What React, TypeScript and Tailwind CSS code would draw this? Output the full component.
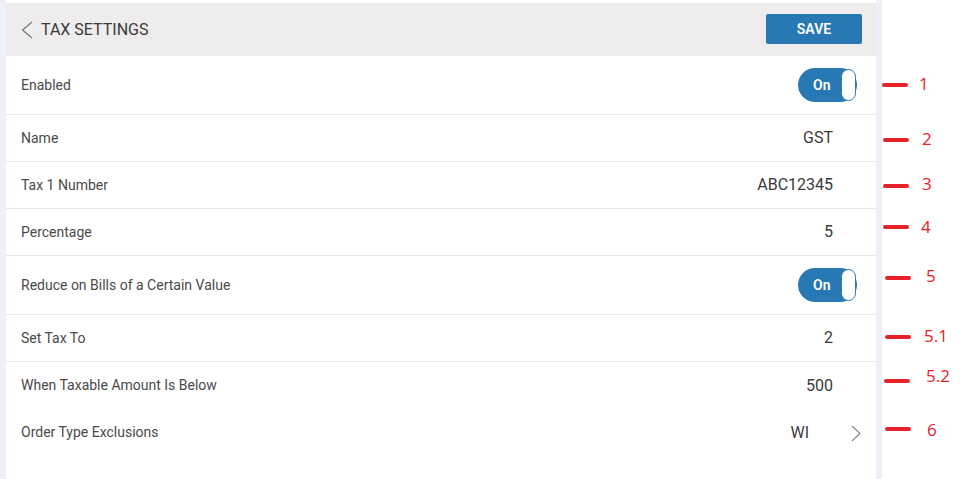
const rows = [
  { label: "Enabled", toggle: true },
  { label: "Name", value: "GST" },
  { label: "Tax 1 Number", value: "ABC12345" },
  { label: "Percentage", value: "5" },
  { label: "Reduce on Bills of a Certain Value", toggle: true },
  { label: "Set Tax To", value: "2" },
  { label: "When Taxable Amount Is Below", value: "500", noBorder: true },
  { label: "Order Type Exclusions", value: "WI", link: true, noBorder: true },
];

const notes = [
  { n: "1", line: 85, lx: 882, num: 84, nx: 919 },
  { n: "2", line: 140, lx: 883, num: 139, nx: 922 },
  { n: "3", line: 186, lx: 883, num: 184, nx: 922 },
  { n: "4", line: 227, lx: 883, num: 227, nx: 921 },
  { n: "5", line: 278, lx: 885, num: 276, nx: 926 },
  { n: "5.1", line: 337, lx: 885, num: 336, nx: 924 },
  { n: "5.2", line: 381, lx: 884, num: 376, nx: 926 },
  { n: "6", line: 429, lx: 885, num: 430, nx: 927 },
];

function Toggle() {
  return (
    <div className="relative w-[59px] h-[34px] rounded-full bg-[#2878b3] flex items-center pl-[15px]">
      <span className="text-white text-[14px] font-semibold">On</span>
      <div className="absolute right-[1px] top-[1px] w-[15px] h-[32px] rounded-full bg-white border border-[#2878b3]" />
    </div>
  );
}

export default function App() {
  return (
    <div className="relative w-[967px] h-[479px] bg-white flex" style={{ fontFamily: "Roboto, sans-serif" }}>
      <div className="w-[6px] bg-[#eef0f8]" />
      <div className="w-[870px] flex flex-col pt-[3px] bg-white">
        {/* Header */}
        <div className="h-[53px] bg-[#eeeced] flex items-center pl-[15px] pr-[14px]">
          <svg width="12" height="18" viewBox="0 0 12 18" className="mt-[1px]">
            <polyline points="11,1 1.5,9 11,17" fill="none" stroke="#777" strokeWidth="1.2" />
          </svg>
          <span className="ml-[8px] text-[16px] text-[#3a3a3a]">TAX SETTINGS</span>
          <button className="ml-auto mt-[-1px] w-[96px] h-[30px] rounded-[2px] bg-[#2878b4] text-white text-[14px] font-semibold">
            SAVE
          </button>
        </div>
        {rows.map((r) => (
          <div
            key={r.label}
            className={`flex items-center pl-[15px] pr-[19px] ${r.toggle ? "h-[59px]" : "h-[47px]"} ${r.noBorder ? "" : "border-b border-[#e8e8e8]"}`}
          >
            <span className="text-[14px] text-[#4a4a4a]">{r.label}</span>
            <div className="ml-auto flex items-center">
              {r.toggle ? (
                <Toggle />
              ) : r.link ? (
                <>
                  <span className="text-[16px] text-[#3a3a3a]">{r.value}</span>
                  <svg width="10" height="17" viewBox="0 0 10 17" className="ml-[42px] mr-[-4px] mt-[2px]">
                    <polyline points="1,1 9,8.5 1,16" fill="none" stroke="#888" strokeWidth="1.2" />
                  </svg>
                </>
              ) : (
                <span className="mr-[24px] text-[16px] text-[#3a3a3a]">{r.value}</span>
              )}
            </div>
          </div>
        ))}
      </div>
      <div className="w-[6px] bg-[#eef0f8]" />
      <div className="flex-1" />

      {/* annotations */}
      {notes.map((a) => (
        <div key={a.n}>
          <div
            className="absolute w-[26px] h-[4px] rounded-full bg-[#e52329]"
            style={{ left: a.lx, top: a.line - 2 }}
          />
          <div
            className="absolute text-[17px] leading-[20px] text-[#e8202a]"
            style={{ left: a.nx, top: a.num - 10, fontFamily: "'Open Sans', sans-serif" }}
          >
            {a.n}
          </div>
        </div>
      ))}
    </div>
  );
}
